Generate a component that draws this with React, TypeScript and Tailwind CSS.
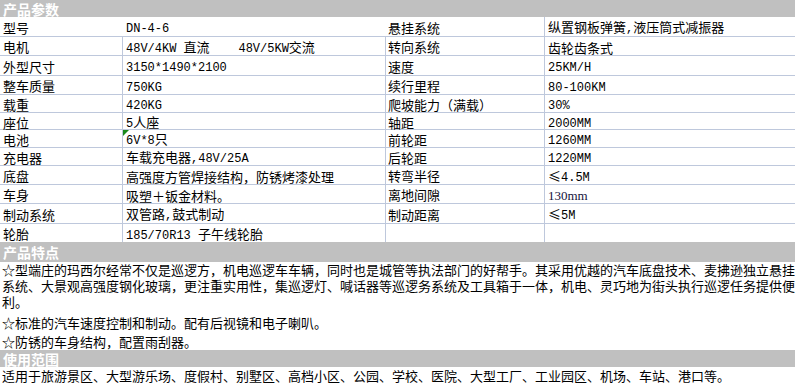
import React from "react";

type Row = {
  h: string;
  a: string;
  b: string;
  c: string;
  d: string;
  first?: boolean;
  flag?: boolean;
  serifD?: boolean;
};

const rows: Row[] = [
  { h: "h-[20px]", a: "型号", b: "DN-4-6", c: "悬挂系统", d: "纵置钢板弹簧,液压筒式减振器", first: true },
  { h: "h-[19px]", a: "电机", b: "48V/4KW 直流    48V/5KW交流", c: "转向系统", d: "齿轮齿条式" },
  { h: "h-[20px]", a: "外型尺寸", b: "3150*1490*2100", c: "速度", d: "25KM/H" },
  { h: "h-[19px]", a: "整车质量", b: "750KG", c: "续行里程", d: "80-100KM" },
  { h: "h-[18px]", a: "载重", b: "420KG", c: "爬坡能力（满载）", d: "30%" },
  { h: "h-[17px]", a: "座位", b: "5人座", c: "轴距", d: "2000MM" },
  { h: "h-[18px]", a: "电池", b: "6V*8只", c: "前轮距", d: "1260MM", flag: true },
  { h: "h-[18px]", a: "充电器", b: "车载充电器,48V/25A", c: "后轮距", d: "1220MM" },
  { h: "h-[19px]", a: "底盘", b: "高强度方管焊接结构，防锈烤漆处理", c: "转弯半径", d: "≤4.5M" },
  { h: "h-[19px]", a: "车身", b: "吸塑＋钣金材料。", c: "离地间隙", d: "130mm", serifD: true },
  { h: "h-[20px]", a: "制动系统", b: "双管路,鼓式制动", c: "制动距离", d: "≤5M" },
  { h: "h-[18px]", a: "轮胎", b: "185/70R13 子午线轮胎", c: "", d: "" },
];

function Mixed({ text }: { text: string }) {
  const parts = text.split(/([\x20-\x7e]+)/).filter((p) => p.length > 0);
  return (
    <span className="whitespace-pre">
      {parts.map((p, i) =>
        /^[\x20-\x7e]+$/.test(p) ? (
          <span key={i} className="font-['Liberation_Mono',monospace] text-[12px]">
            {p}
          </span>
        ) : (
          <span key={i}>{p}</span>
        )
      )}
    </span>
  );
}

function Bar({ title, h }: { title: string; h: string }) {
  return (
    <div className={`${h} bg-[#c0c0c0] flex items-center pl-[3px] text-white font-bold text-[14px] leading-none`}>
      {title}
    </div>
  );
}

export default function App() {
  return (
    <div className="w-[795px] h-[383px] overflow-hidden bg-white text-black font-['Noto_Sans_CJK_SC','Noto_Sans_CJK_JP',sans-serif] text-[13px] leading-none">
      <div className="h-[17px] bg-[#c0c0c0] flex items-center pl-[3px] text-white font-bold text-[14px] leading-none">
        产品参数
      </div>
      <div className="flex flex-col">
        {rows.map((r, i) => (
          <div
            key={i}
            className={`${r.h} grid grid-cols-[122px_263px_159px_251px] ${
              i < rows.length - 1 ? "border-b border-[#bec8dc]" : ""
            }`}
          >
            <div className="flex items-center pl-[3px] pt-[1px] whitespace-pre">{r.a}</div>
            <div
              className={`relative flex items-center pl-[3px] pt-[2px] border-l ${
                r.first ? "border-transparent" : "border-[#bec8dc]"
              }`}
            >
              {r.flag && (
                <span className="absolute left-0 top-0 w-0 h-0 border-t-[6px] border-t-[#1a8a1a] border-r-[6px] border-r-transparent" />
              )}
              <Mixed text={r.b} />
            </div>
            <div
              className={`flex items-center pl-[2px] pt-[1px] whitespace-pre border-l ${
                r.first ? "border-transparent" : "border-[#bec8dc]"
              }`}
            >
              {r.c}
            </div>
            <div className="flex items-center pl-[3px] pt-[2px] border-l border-[#bec8dc]">
              {r.serifD ? (
                <span className="font-['Liberation_Serif',serif] text-[13px] text-[#14143c]">{r.d}</span>
              ) : (
                <Mixed text={r.d} />
              )}
            </div>
          </div>
        ))}
      </div>
      <Bar title="产品特点" h="h-[20px]" />
      <div className="h-[51px] pl-[2px] leading-[16px] whitespace-nowrap">
        ☆型端庄的玛西尔经常不仅是巡逻方，机电巡逻车车辆，同时也是城管等执法部门的好帮手。其采用优越的汽车底盘技术、麦拂逊独立悬挂
        <br />
        系统、大景观高强度钢化玻璃，更注重实用性，集巡逻灯、喊话器等巡逻务系统及工具箱于一体，机电、灵巧地为街头执行巡逻任务提供便
        <br />
        利。
      </div>
      <div className="h-[19px] pl-[2px] flex items-center whitespace-nowrap">☆标准的汽车速度控制和制动。配有后视镜和电子喇叭。</div>
      <div className="h-[18px] pl-[2px] flex items-center whitespace-nowrap">☆防锈的车身结构，配置雨刮器。</div>
      <Bar title="使用范围" h="h-[17px]" />
      <div className="h-[16px] pl-[2px] flex items-center whitespace-nowrap">
        适用于旅游景区、大型游乐场、度假村、别墅区、高档小区、公园、学校、医院、大型工厂、工业园区、机场、车站、港口等。
      </div>
    </div>
  );
}
